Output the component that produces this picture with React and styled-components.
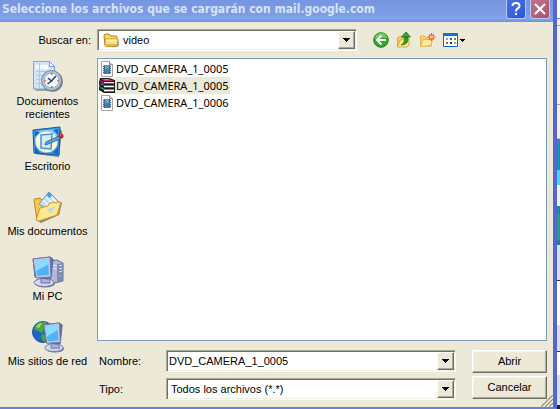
import React from 'react'
import styled, { createGlobalStyle } from 'styled-components'

const GlobalStyle = createGlobalStyle`
  * {
    box-sizing: border-box;
  }

  body {
    margin: 0;
    background: #fff;
    font-family: 'Liberation Sans', Arial, sans-serif;
    font-size: 11px;
    line-height: 13px;
    color: #000;
  }

  button, input, select {
    font: inherit;
    color: inherit;
    margin: 0;
    padding: 0;
  }

  svg {
    display: block;
    flex: none;
  }
`
const Screen = styled.div`
  display: flex;
  min-height: 100vh;
`
const Dialog = styled.main`
  flex: 1;
  min-width: 0;
  display: flex;
  flex-direction: column;
  background: #ece9d8;
  border: solid #6a80dc;
  border-width: 0 4px 2px 0;
  border-right-color: #5565d2;
`
const TitleBar = styled.header`
  display: flex;
  height: 22px;
  padding: 0 3px 0 2px;
  gap: 4px;
  background: linear-gradient(#7796e2, #7c9ae4 60%, #82a6ee 85%, #6f8fe0);
`
const Title = styled.h1`
  flex: 1;
  margin: 0;
  font-family: 'DejaVu Sans Condensed', 'Noto Sans', sans-serif;
  font-size: 12px;
  line-height: 19px;
  font-weight: bold;
  white-space: nowrap;
  color: #d6e4fa;
`
const CaptionButton = styled.button`
  display: flex;
  align-items: center;
  justify-content: center;
  width: 20px;
  height: 19px;
  border: 1px solid #b3c8f5;
  border-top: 0;
  border-radius: 0 0 3px 3px;
  background: ${props => props.$color};
`
const Body = styled.div`
  flex: 1;
  display: grid;
  grid-template-columns: 95px 1fr;
  grid-template-rows: auto 1fr auto;
  column-gap: 2px;
  padding: 7px 6px 0 0;
`
const LookInLabel = styled.label`
  padding: 5px 4px 0 0;
  text-align: right;
`
const LookIn = styled.div`
  display: flex;
  align-items: center;
  gap: 16px;
  height: 29px;
  padding-bottom: 7px;
`
const Field = styled.div`
  position: relative;
  display: flex;
  align-items: center;
  gap: 4px;
  flex: ${props => props.$basis || 'auto'};
  height: 22px;
  padding: 1px 20px 1px ${props => props.$pad || 2}px;
  background: #fff;
  border: 1px solid;
  border-color: #aca899 #fff #fff #aca899;
  box-shadow: inset 1px 1px #716f64, inset -1px -1px #f1efe2;
`
const Select = styled.select`
  flex: 1;
  min-width: 0;
  height: 17px;
  appearance: none;
  border: 0;
  outline: 0;
  background: none;
`
const TextBox = styled.input`
  flex: 1;
  min-width: 0;
  height: 17px;
  border: 0;
  outline: 0;
  background: none;
`
const DropArrow = styled.span`
  position: absolute;
  top: 1px;
  right: 1px;
  bottom: 1px;
  width: 17px;
  display: flex;
  align-items: center;
  justify-content: center;
  pointer-events: none;
  background: #ece9d8;
  border: 1px solid;
  border-color: #fff #716f64 #716f64 #fff;
  box-shadow: inset -1px -1px #aca899;
`
const Tools = styled.div`
  display: flex;
  align-items: center;
  gap: 7px;
`
const ToolButton = styled.button`
  display: flex;
  align-items: center;
  gap: 2px;
  border: 0;
  background: none;
`
const Places = styled.nav`
  grid-row: 2 / 4;
  padding-top: 3px;
`
const Place = styled.button`
  display: flex;
  flex-direction: column;
  align-items: center;
  gap: 2px;
  width: 100%;
  height: 65px;
  border: 0;
  background: none;
  line-height: 13px;

  span {
    max-width: 84px;
  }
`
const FileList = styled.ul`
  margin: 0;
  padding: 1px;
  list-style: none;
  background: #fff;
  border: 1px solid #7f9db9;
`
const File = styled.button`
  display: flex;
  align-items: center;
  height: 17px;
  border: 0;
  background: none;
  font-family: 'Noto Sans', sans-serif;
  line-height: 17px;

  span {
    padding: 0 1px;
    background: ${props => props.$selected ? '#ece9d8' : 'none'};
  }
`
const Form = styled.div`
  display: flex;
  align-items: flex-start;
  gap: 16px;
  padding: 9px 0 7px 2px;
`
const Fields = styled.div`
  flex: 1;
  display: grid;
  grid-template-columns: 67px 1fr;
  row-gap: 6px;
  align-items: center;
`
const Actions = styled.div`
  display: grid;
  gap: 3px;
  width: 75px;
`
const PushButton = styled.button`
  height: 23px;
  background: #ece9d8;
  border: 1px solid;
  border-color: #fff #716f64 #716f64 #fff;
  box-shadow: inset -1px -1px #aca899, inset 1px 1px #f6f4ea;
`
const Grip = styled.svg`
  position: absolute;
  right: 4px;
  bottom: 2px;
`
const Frame = styled.div`
  position: relative;
  flex: 1;
  display: flex;
  min-width: 0;
`
const Backdrop = styled.div`
  width: 3px;
  display: flex;
  flex-direction: column;
`
const Strip = styled.div`
  flex: ${props => props.$size} 0 0;
  background: ${props => props.$color};
  border-top: ${props => props.$line ? `1px solid ${props.$line}` : '0'};
`

const DownTriangle = ({ size = 7 }) => (
  <svg width={size} height='4' viewBox='0 0 7 4' aria-hidden='true'>
    <path d='M0 0h7v1H0zM1 1h5v1H1zM2 2h3v1H2zM3 3h1v1H3z' fill='#000' />
  </svg>
)

const SmallTriangle = () => (
  <svg width='5' height='3' viewBox='0 0 5 3' aria-hidden='true'>
    <path d='M0 0h5v1H0zM1 1h3v1H1zM2 2h1v1H2z' fill='#000' />
  </svg>
)

const FolderIcon = () => (
  <svg width='16' height='15' viewBox='0 0 16 15' aria-hidden='true'>
    <path d='M3 14h11l2-1V5l-1 8z' fill='#8e8a80' />
    <path d='M1 3q0-2 2-2h3l2 2h5q1 0 1 1v8q0 1-1 1H3q-1 0-1-1z' fill='#f7d36b' stroke='#b87d12' />
    <path d='M3 6h11q1 0 1 1l-1 5q0 1-1 1H3q-1 0-1-1V7q0-1 1-1z' fill='#fbe07d' stroke='#c78f1c' />
    <path d='M3 7h11M3 8h10' stroke='#fff5bd' />
    <path d='M3 11.500h10' stroke='#edb93c' />
  </svg>
)

const BackIcon = () => (
  <svg width='16' height='16' viewBox='0 0 16 16' aria-hidden='true'>
    <circle cx='8' cy='8' r='7.300' fill='#33a62b' stroke='#2f7d25' />
    <path d='M2 7a6 5.500 0 0 1 12-1Q8 5 2 7z' fill='#6dcd5d' />
    <path d='M8.500 3.500 4 8l4.500 4.500M4.500 8H13' fill='none' stroke='#fff' strokeWidth='2' />
  </svg>
)

const UpIcon = () => (
  <svg width='16' height='16' viewBox='0 0 16 16' aria-hidden='true'>
    <path d='M1.500 14V5.500l3-1 1 1H12v8z' fill='#f5cf62' stroke='#d9ab3e' />
    <path d='m1.500 15 2.500-7 9-1v6l-2 2z' fill='#fde68c' stroke='#d9ab3e' />
    <path d='M5 13q4-2 3.500-8H12q1 8-7 8z' fill='#2f9d28' stroke='#176b18' strokeWidth='.6' />
    <path d='m5.500 5 4.500-5 4.500 5z' fill='#38ab2e' stroke='#176b18' strokeWidth='.8' />
  </svg>
)

const NewFolderIcon = () => (
  <svg width='17' height='16' viewBox='0 0 17 16' aria-hidden='true'>
    <path d='M1.500 14V4h4l1 1.500h6V14z' fill='#f8d672' stroke='#e0b452' />
    <path d='m1.500 14.500 2.500-7h9.500l-1.500 6z' fill='#fee99a' stroke='#e0b452' />
    <path d='M12.500 1v8M8.500 5h8M10 2.500l5 5M15 2.500l-5 5' stroke='#f0562a' strokeWidth='1.200' />
    <circle cx='12.500' cy='5' r='1.500' fill='#ffcf6c' />
  </svg>
)

const ViewsIcon = () => (
  <svg width='15' height='14' viewBox='0 0 15 14' aria-hidden='true'>
    <path d='M.5.5h14v13H.5z' fill='#fff' stroke='#1265cc' />
    <path d='M0 0h15v3H0z' fill='#1371db' />
    <path d='M3 5h2v2H3z' fill='#8ca4c8' />
    <path d='M7 5h2v2H7z' fill='#2b5bd0' />
    <path d='M11 5h2v2h-2z' fill='#37a25a' />
    <path d='M3 9h2v2H3z' fill='#d8502e' />
    <path d='M7 9h2v2H7z' fill='#23366f' />
    <path d='M11 9h2v2h-2z' fill='#d8a23a' />
  </svg>
)

const RecentIcon = () => (
  <svg width='32' height='32' viewBox='0 0 32 32' aria-hidden='true'>
    <path d='M2 28h16v2H4z' fill='#a5a291' />
    <path d='M1.500.5h16l5 5V28h-21z' fill='#d3e5fb' stroke='#7ba4dc' />
    <path d='M4 4h12v4H4z' fill='#f6faff' />
    <path d='M4 10.500h13M4 14.500h10M4 18.500h8M4 22.500h8M7.500 2v25' stroke='#a9c8f1' />
    <path d='M17.500.5v5h5z' fill='#fff' stroke='#6e9ade' />
    <circle cx='20.500' cy='20.500' r='10.500' fill='#777e8e' />
    <circle cx='19.500' cy='19.500' r='10' fill='#b9c4d2' stroke='#768299' />
    <circle cx='19.500' cy='19.500' r='7.500' fill='#f4faff' stroke='#8cabc9' />
    <path d='m16 17 3.500 3 4.500-5M19.500 20l-4 3' fill='none' stroke='#263e62' strokeWidth='1.500' />
    <path d='M19 12h1.500v2H19zM19 25h1.500v2H19zM12 19h2v1.500h-2zM25 19h2v1.500h-2z' fill='#e9703e' />
  </svg>
)

const DesktopIcon = () => (
  <svg width='32' height='32' viewBox='0 0 32 32' aria-hidden='true'>
    <path d='m3 28 24 3 3-26-2-2z' fill='#77808a' />
    <path d='m1 4 27-3-1 28-25-2z' fill='#3a96e6' stroke='#0c56ac' />
    <path d='m3 5 23-2-1 8q-9-1-22 4z' fill='#8cc8f6' />
    <ellipse cx='14.500' cy='16' rx='11' ry='10.500' fill='#fff6cf' />
    <path d='m3 20 4 6 1 1H3zM21 27l5-6v7zM3 5l5 1-5 5zM21 4l5 5V3z' fill='#1568c2' />
    <path d='m9 9 11-1-1 15-10-1z' fill='#d3ebff' stroke='#4794da' strokeWidth='1.500' />
    <path d='m14 16 13-6 1 3-12 5-3 1z' fill='#5fa2d9' stroke='#245b92' strokeWidth='.8' />
    <circle cx='29' cy='10' r='2.500' fill='#bd271f' />
    <path d='M28 9h1' stroke='#ffb49a' />
  </svg>
)

const DocumentsIcon = () => (
  <svg width='32' height='32' viewBox='0 0 32 32' aria-hidden='true'>
    <path d='m4 29 5 3 18-8 3-12-2-1z' fill='#8d897c' />
    <path d='M2 9q0-1 1-1l5-1 3 3 16 1v12L5 29z' fill='#f5c94e' stroke='#b78627' />
    <path d='m17 1 10 10-8 10L7 13z' fill='#b9e0fa' stroke='#6599cc' />
    <path d='m14 6 7 7M17 3l7 8M11 9l8 8' stroke='#f4fbff' strokeWidth='1.500' />
    <path d='m16 1 4 3-2 3-3-2z' fill='#4b98d6' />
    <path d='m4 29 4-12 8-2 2-3 11-1-4 13-18 6z' fill='#fde88b' stroke='#c99a32' />
    <path d='m16 18 8-3-6 8z' fill='#b8dcef' />
  </svg>
)

const Monitor = () => (
  <>
    <ellipse cx='13' cy='27.500' rx='10' ry='4' fill='#666d9a' />
    <ellipse cx='12' cy='26.500' rx='10' ry='4' fill='#d2d5ef' stroke='#777da9' />
    <path d='M9 21h8l1 6H9z' fill='#adb3d6' stroke='#6c74a4' />
    <path d='m1 3 17-2 3 2-2 19-4 1L3 21z' fill='#6570a8' stroke='#5863a0' />
    <path d='m1 3 17-2 1 20-15 1z' fill='#c3caec' stroke='#7079aa' />
    <path d='m3 5 13-2 1 16-12 1z' fill='#4fb4f4' />
    <path d='m3 5 13-2 1 5-13 7z' fill='#8cdafd' />
  </>
)

const ComputerIcon = () => (
  <svg width='32' height='32' viewBox='0 0 32 32' aria-hidden='true'>
    <path d='m17 5 8-1 6 3v18l-8 2-6-4z' fill='#b3b8d8' stroke='#606892' />
    <path d='m25 8 6-1v18l-6 2z' fill='#7f87b5' />
    <path d='m20 9 5 1M20 12l5 1M27 10l3-1M27 13l3-1M27 16l3-1' stroke='#e6e8f8' />
    <path d='M27 19h2v2h-2z' fill='#65c76c' />
    <Monitor />
  </svg>
)

const NetworkIcon = () => (
  <svg width='32' height='32' viewBox='0 0 32 32' aria-hidden='true'>
    <circle cx='11' cy='11' r='10.500' fill='#1e65c6' stroke='#245096' />
    <path d='M4 4q4-4 10-3l2 4-4 3-2 4-4-2-4-2zM10 13l5 2 1 4-4 2-3-4z' fill='#49ac3d' />
    <path d='M4 6q2-4 6-4l-3 5z' fill='#96de68' />
    <svg x='11' y='1' width='21' height='31' viewBox='0 0 23 32' preserveAspectRatio='none'>
      <Monitor />
    </svg>
  </svg>
)

const VideoIcon = () => (
  <svg width='16' height='16' viewBox='0 0 16 16' aria-hidden='true'>
    <path d='M2.500.5h8l3 3v12h-11z' fill='#fff' stroke='#a4a4a4' />
    <path d='M10.500.5v3h3' fill='#e8e8e8' stroke='#8b8b8b' />
    <path d='M4 4h8v9H4z' fill='#4b6680' />
    <path d='M6 4h4v4H6z' fill='#58a7cf' />
    <path d='M6 9h4v4H6z' fill='#3c80b8' />
    <path d='M6 8h4v1H6z' fill='#b35463' />
    <path d='M4.500 4v9M11.500 4v9' stroke='#c8d6e0' strokeDasharray='1 1' />
  </svg>
)

const ArchiveIcon = () => (
  <svg width='16' height='16' viewBox='0 0 16 16' aria-hidden='true'>
    <path d='M1 0h9l6 2v13H5l-5-3V9l1-1-1-1V4z' fill='#1d1a1c' />
    <path d='M2 1h8l5 2H5z' fill='#d4246a' />
    <path d='M5 1h3l2 1H7z' fill='#f0a13c' />
    <path d='m1 2 4 2v2L1 4z' fill='#a01850' />
    <path d='M5 4h10v1H5z' fill='#fff' />
    <path d='M5 5h10v1H5z' fill='#c02566' />
    <path d='m1 6 4 2h10v-1H6L2 5z' fill='#2b6fd6' />
    <path d='M5 8h10v1H5z' fill='#fff' />
    <path d='M5 9h10v1H5z' fill='#2b57b8' />
    <path d='m1 10 4 2h10v-1H6L2 9z' fill='#2aa866' />
    <path d='M5 12h10v1H5z' fill='#fff' />
    <path d='M5 13h10v1H5z' fill='#159057' />
  </svg>
)

const places = [
  { name: 'Documentos recientes', Icon: RecentIcon },
  { name: 'Escritorio', Icon: DesktopIcon },
  { name: 'Mis documentos', Icon: DocumentsIcon },
  { name: 'Mi PC', Icon: ComputerIcon },
  { name: 'Mis sitios de red', Icon: NetworkIcon }
]

const files = [
  { name: 'DVD_CAMERA_1_0005', Icon: VideoIcon },
  { name: 'DVD_CAMERA_1_0005', Icon: ArchiveIcon, selected: true },
  { name: 'DVD_CAMERA_1_0006', Icon: VideoIcon }
]

// edge of the web page that shows to the right of the dialog
const strips = [
  { size: 18, color: '#fff' },
  { size: 6, color: '#e9eef6', line: '#5b87c8' },
  { size: 80, color: '#f1efe6', line: '#a5a397' },
  { size: 33, color: '#f1efe6', line: '#a5a397' },
  { size: 4, color: '#4f70cf', line: '#a9bce8' },
  { size: 27, color: '#0f92a4' },
  { size: 16, color: '#44d4f0' },
  { size: 21, color: '#f1f1f1' },
  { size: 8, color: '#1a8a96' },
  { size: 27, color: '#1ba277' },
  { size: 5, color: '#1b8294' },
  { size: 35, color: '#d4dfe9' },
  { size: 45, color: '#fff', line: '#333' },
  { size: 26, color: '#d4dfe9' },
  { size: 23, color: '#fff', line: '#333' },
  { size: 31, color: '#d4dfe9' },
  { size: 4, color: '#222' }
]

const App = () => (
  <Screen>
    <GlobalStyle />
    <Frame>
      <Dialog>
        <TitleBar>
          <Title>Seleccione los archivos que se cargarán con mail.google.com</Title>
          <CaptionButton $color='linear-gradient(135deg, #4a72e4, #2b55d4)' aria-label='Ayuda'>
            <svg width='12' height='14' viewBox='0 0 12 14' aria-hidden='true'>
              <path d='M2.500 4q0-3 3.500-3t3.500 3q0 1.500-2 2.500Q6 7.500 6 9.500' fill='none' stroke='#fff' strokeWidth='2' />
              <path d='M5 11h2v2H5z' fill='#fff' />
            </svg>
          </CaptionButton>
          <CaptionButton $color='linear-gradient(135deg, #c07590, #ac4f68)' aria-label='Cerrar'>
            <svg width='12' height='12' viewBox='0 0 12 12' aria-hidden='true'>
              <path d='m1 1 10 10M11 1 1 11' stroke='#fff' strokeWidth='2' />
            </svg>
          </CaptionButton>
        </TitleBar>
        <Body>
          <LookInLabel htmlFor='folder'>Buscar en:</LookInLabel>
          <LookIn>
            <Field $basis='0 1 260px' $pad={5}>
              <FolderIcon />
              <Select id='folder'>
                <option>video</option>
              </Select>
              <DropArrow><DownTriangle /></DropArrow>
            </Field>
            <Tools>
              <ToolButton aria-label='Atrás'><BackIcon /></ToolButton>
              <ToolButton aria-label='Subir un nivel'><UpIcon /></ToolButton>
              <ToolButton aria-label='Crear nueva carpeta'><NewFolderIcon /></ToolButton>
              <ToolButton aria-label='Ver'><ViewsIcon /><SmallTriangle /></ToolButton>
            </Tools>
          </LookIn>
          <Places>
            {places.map(({ name, Icon }) => (
              <Place key={name}>
                <Icon />
                <span>{name}</span>
              </Place>
            ))}
          </Places>
          <FileList>
            {files.map(({ name, Icon, selected }, i) => (
              <li key={i}>
                <File $selected={selected}>
                  <Icon />
                  <span>{name}</span>
                </File>
              </li>
            ))}
          </FileList>
          <Form>
            <Fields>
              <label htmlFor='name'>Nombre:</label>
              <Field>
                <TextBox id='name' defaultValue='DVD_CAMERA_1_0005' />
                <DropArrow><DownTriangle /></DropArrow>
              </Field>
              <label htmlFor='type'>Tipo:</label>
              <Field $pad={4}>
                <Select id='type'>
                  <option>Todos los archivos (*.*)</option>
                </Select>
                <DropArrow><DownTriangle /></DropArrow>
              </Field>
            </Fields>
            <Actions>
              <PushButton>Abrir</PushButton>
              <PushButton>Cancelar</PushButton>
            </Actions>
          </Form>
        </Body>
      </Dialog>
      <Grip width='12' height='12' viewBox='0 0 12 12' aria-hidden='true'>
        <path d='M0 12 12 0M4 12l8-8M8 12l4-4' stroke='#9d9a8a' strokeWidth='1.500' />
        <path d='M2 12 12 2M6 12l6-6M10 12l2-2' stroke='#fff' />
      </Grip>
    </Frame>
    <Backdrop>
      {strips.map((s, i) => <Strip key={i} $size={s.size} $color={s.color} $line={s.line} />)}
    </Backdrop>
  </Screen>
)

export default App
